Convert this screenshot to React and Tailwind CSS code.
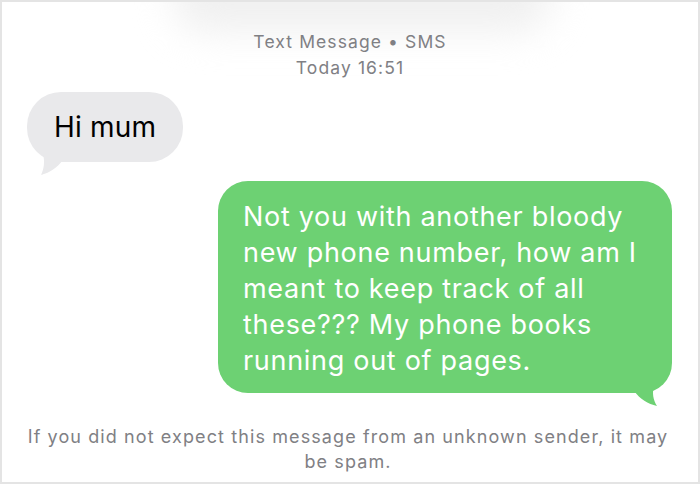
import React from "react";

const font = { fontFamily: "Inter, 'Liberation Sans', sans-serif" };

function GrayTail() {
  return (
    <svg className="absolute left-[8px] bottom-[-14px]" width="30" height="22" viewBox="0 0 30 22">
      <path d="M8 0 C10 8 9 15 6 21 C14 19 22 14 28 6 L28 0 Z" fill="#e9e9eb" />
    </svg>
  );
}

function GreenTail() {
  return (
    <svg className="absolute right-[10px] bottom-[-14px]" width="30" height="22" viewBox="0 0 30 22">
      <path d="M22 0 C20 8 21 15 25 21 C16 19 8 14 2 6 L2 0 Z" fill="#6dd173" />
    </svg>
  );
}

export default function App() {
  return (
    <div
      className="relative w-[700px] h-[484px] bg-white border-[2px] border-[#e4e4e4] overflow-hidden"
      style={font}
    >
      {/* soft shade under the top bar */}
      <div className="pointer-events-none absolute left-[170px] top-[-40px] w-[380px] h-[70px] rounded-full bg-[#f0f0f0] blur-[18px]" />

      <div className="relative flex flex-col">
        <div className="pt-[27px] flex flex-col items-center text-[#808084] text-[17.5px] leading-[26px] tracking-[1.1px]">
          <div>Text Message • SMS</div>
          <div>Today 16:51</div>
        </div>

        <div className="mt-[11px] pl-[25px] flex">
          <div className="relative rounded-[34px] bg-[#e9e9eb] h-[70px] w-[156px] flex items-center pl-[27px] text-[28px] tracking-[0.2px] text-black">
            Hi mum
            <GrayTail />
          </div>
        </div>

        <div className="mt-[19px] pr-[26px] flex justify-end">
          <div className="relative rounded-[30px] bg-[#6dd173] w-[454px] h-[212px] pl-[25px] pt-[18px] text-white text-[27px] leading-[36px] tracking-[0.7px]">
            Not you with another bloody
            <br />
            new phone number, how am I
            <br />
            meant to keep track of all
            <br />
            these??? My phone books
            <br />
            running out of pages.
            <GreenTail />
          </div>
        </div>

        <div className="mt-[31px] pr-[4px] text-center text-[#808084] text-[18px] leading-[25px] tracking-[1.1px]">
          If you did not expect this message from an unknown sender, it may
          <br />
          be spam.
        </div>
      </div>
    </div>
  );
}
